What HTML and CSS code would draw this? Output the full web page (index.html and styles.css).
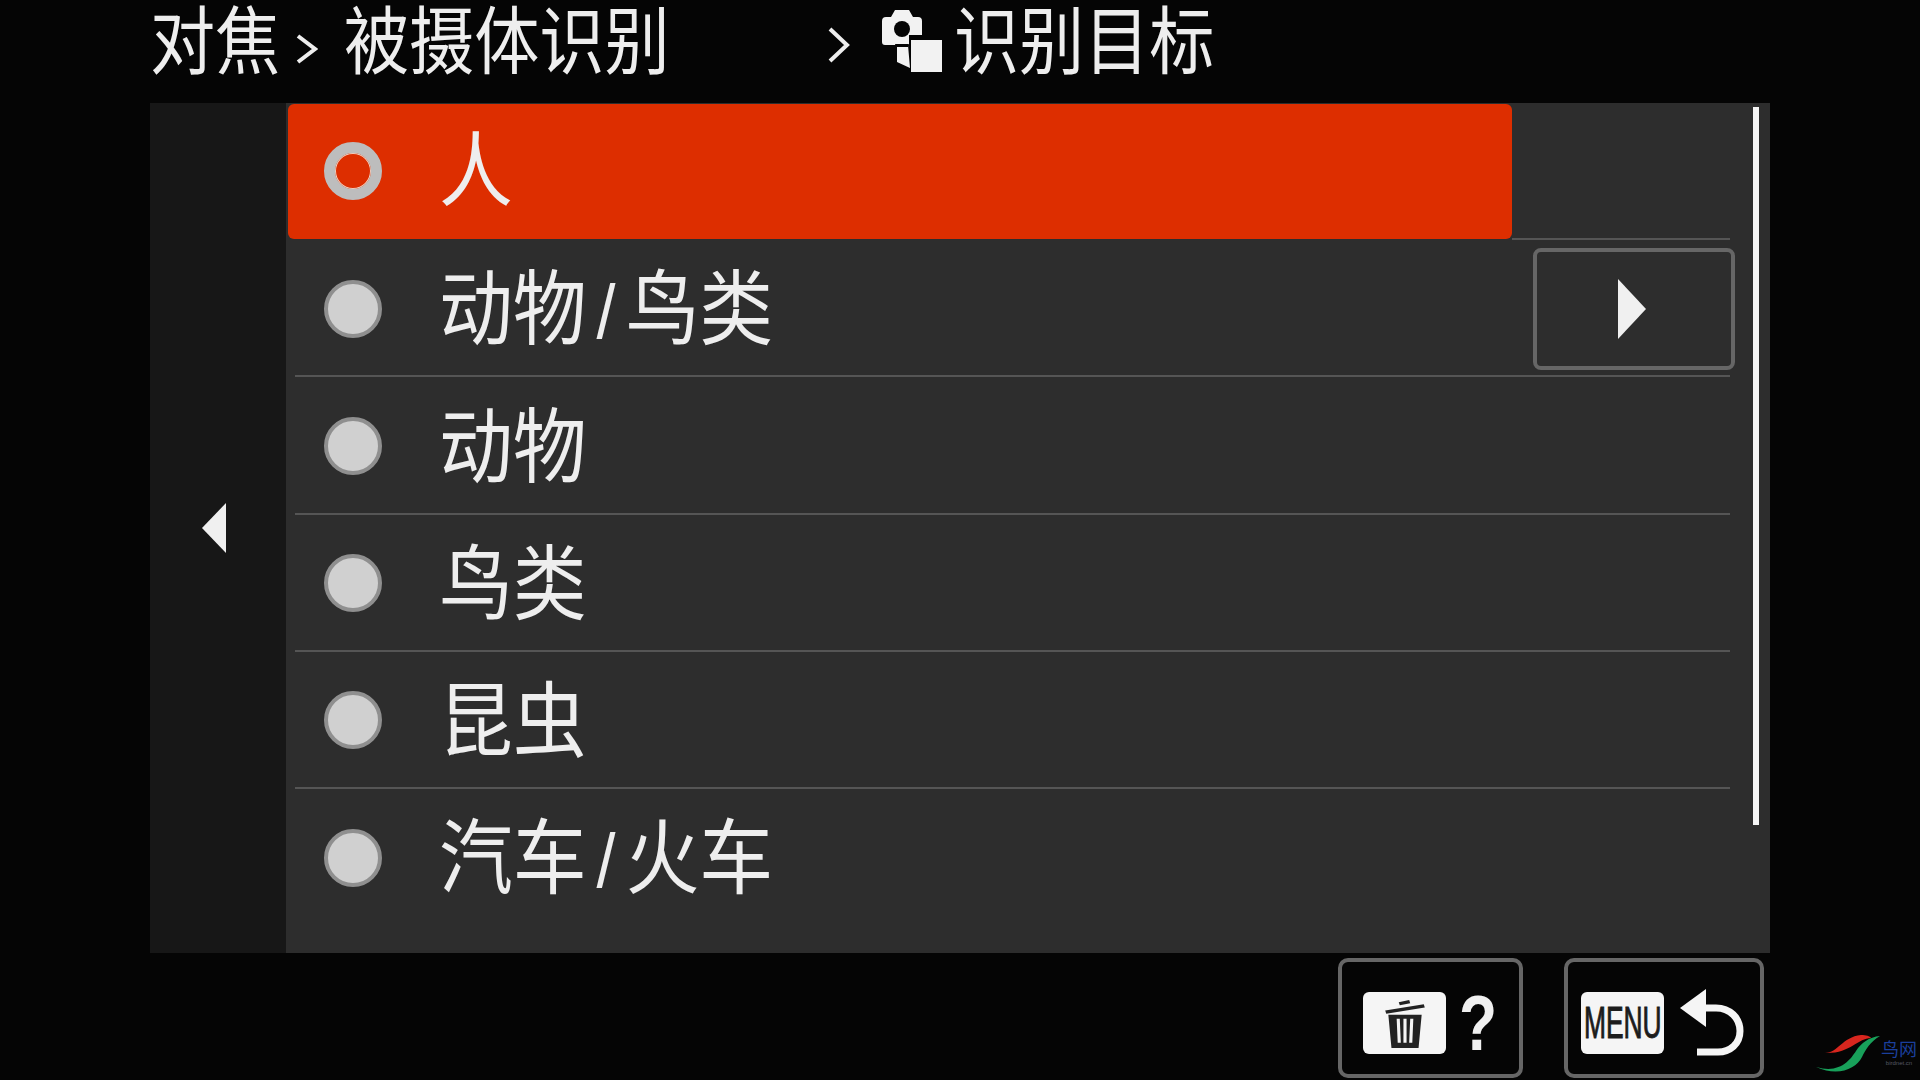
FILE: index.html
```html
<!DOCTYPE html>
<html lang="zh-CN">
<head>
    <meta charset="UTF-8">
    <title>识别目标</title>
    <link rel="stylesheet" href="styles.css">
</head>
<body>
    <header class="title-bar">
        <div class="crumb crumb-focus"><span>对焦</span></div>
        <svg class="chevron chevron-first" viewBox="0 0 22 30"><path d="M2 2 L19 15 L2 28" /></svg>
        <div class="crumb crumb-subject"><span>被摄体识别</span></div>
        <svg class="chevron chevron-second" viewBox="0 0 22 36"><path d="M2 2 L19 18 L2 34" /></svg>
        <svg class="target-icon" viewBox="0 0 60 62">
            <path fill="#f2f2f2" d="M0 11 Q0 7 4 7 H9 L13 0 H27 L31 7 H36 Q40 7 40 11 V25 H27 V35 H26 L28 58 L15 52 V35 H3 Q0 35 0 32 Z" />
            <circle cx="20" cy="19" r="8" fill="#050505" />
            <path fill="#050505" d="M13 34 H27 L26 37 H14 Z" />
            <rect x="29" y="30" width="31" height="32" fill="#f2f2f2" />
        </svg>
        <div class="crumb crumb-target"><span>识别目标</span></div>
    </header>

    <main class="panel">
        <aside class="side-strip">
            <svg class="side-arrow" viewBox="0 0 24 50"><path d="M24 0 V50 L0 25 Z" /></svg>
        </aside>
        <div class="list">
            <div class="row row-selected">
                <div class="row-label">
                    <span class="radio radio-on"></span>
                    <span class="row-text">人</span>
                </div>
            </div>
            <div class="row">
                <div class="row-label">
                    <span class="radio"></span>
                    <span class="row-text">动物<span class="slash">/</span>鸟类</span>
                </div>
                <div class="row-action">
                    <svg class="action-arrow" viewBox="0 0 28 60"><path d="M0 0 L28 30 L0 60 Z" /></svg>
                </div>
            </div>
            <div class="row">
                <div class="row-label">
                    <span class="radio"></span>
                    <span class="row-text">动物</span>
                </div>
            </div>
            <div class="row">
                <div class="row-label">
                    <span class="radio"></span>
                    <span class="row-text">鸟类</span>
                </div>
            </div>
            <div class="row">
                <div class="row-label">
                    <span class="radio"></span>
                    <span class="row-text">昆虫</span>
                </div>
            </div>
            <div class="row row-last">
                <div class="row-label">
                    <span class="radio"></span>
                    <span class="row-text">汽车<span class="slash">/</span>火车</span>
                </div>
            </div>
            <div class="scrollbar"></div>
        </div>
    </main>

    <footer class="key-bar">
        <div class="key key-help">
            <div class="key-tile">
                <svg class="trash-icon" viewBox="0 0 40 48">
                    <path d="M14 4 L24 2 L25 5 L15 7 Z" fill="#222" />
                    <path d="M1 12 L38 6 L39 9 L2 15 Z" fill="#222" />
                    <path d="M4 16 H36 L33 48 H7 Z" fill="#222" />
                    <path d="M12 20 H15 L16 43 H13 Z M18.5 20 H21.5 V43 H18.5 Z M25 20 H28 L27 43 H24 Z" fill="#f5f5f5" />
                </svg>
            </div>
            <span class="help-mark">?</span>
        </div>
        <div class="key key-menu">
            <div class="key-tile">
                <span class="menu-word">MENU</span>
            </div>
            <svg class="back-icon" viewBox="0 0 64 68">
                <path fill="#f5f5f5" d="M0 19 L26 0 V38 Z" />
                <path fill="none" stroke="#f5f5f5" stroke-width="7" d="M22 19 H36 C50 19 60 29 60 42 C60 55 50 63 38 63 H17" />
            </svg>
        </div>
    </footer>

    <div class="watermark">
        <svg class="watermark-logo" viewBox="0 0 64 38">
            <path fill="#d8261e" d="M9 19 C22 19 26 3 45 1 C50 1 54 2 55 4 C42 4 34 20 9 19 Z" />
            <path fill="#18a05a" d="M0 33 C24 40 34 26 40 17 C45 9 53 3 64 2 C54 8 50 15 46 23 C40 35 22 43 0 33 Z" />
        </svg>
        <div class="watermark-text">
            <span class="watermark-name">鸟网</span>
            <span class="watermark-url">birdnet.cn</span>
        </div>
    </div>
</body>
</html>
```

FILE: styles.css
```css
* {
    box-sizing: border-box;
}
html, body {
    margin: 0;
    height: 100%;
}
body {
    width: 1920px;
    height: 1080px;
    overflow: hidden;
    position: relative;
    background-color: #050505;
    color: #eeeeee;
    font-family: "Liberation Sans", "Noto Sans CJK SC", sans-serif;
}

/* title row */
.title-bar {
    display: flex;
    align-items: flex-start;
    height: 103px;
    padding-left: 150px;
}
.crumb {
    height: 86px;
    font-size: 74px;
    line-height: 86px;
    white-space: nowrap;
}
.crumb span {
    display: inline-block;
    transform: scaleX(0.88);
    transform-origin: left center;
}
.crumb-focus {
    width: 146px;
}
.crumb-subject {
    width: 484px;
    margin-left: 26px;
}
.crumb-target {
    margin-left: 12px;
}
.chevron {
    fill: none;
    stroke: #eeeeee;
    stroke-width: 4;
}
.chevron-first {
    width: 22px;
    height: 30px;
    margin-top: 34px;
}
.chevron-second {
    width: 22px;
    height: 36px;
    margin-top: 27px;
}
.target-icon {
    width: 60px;
    height: 62px;
    margin-top: 10px;
    margin-left: 32px;
}

/* main panel */
.panel {
    display: flex;
    width: 1620px;
    height: 850px;
    margin-left: 150px;
    background-color: #2d2d2d;
}
.side-strip {
    display: flex;
    align-items: center;
    justify-content: center;
    width: 136px;
    padding-right: 8px;
    background-color: #171717;
}
.side-arrow {
    width: 24px;
    height: 50px;
    fill: #f0f0f0;
}
.list {
    position: relative;
    flex: 1;
}
.row {
    position: relative;
    display: flex;
    align-items: center;
    height: 137.2px;
}
.row::after {
    content: "";
    position: absolute;
    left: 9px;
    right: 40px;
    bottom: 0;
    height: 2px;
    background-color: #555555;
}
.row-last::after {
    display: none;
}
.row-selected::after {
    left: 1226px;
}
.row-label {
    display: flex;
    align-items: center;
    width: 1224px;
    height: 135px;
    margin-left: 2px;
    padding-left: 36px;
}
.row-selected .row-label {
    background-color: #dd2e00;
    border-radius: 6px;
}
.radio {
    flex: none;
    width: 58px;
    height: 58px;
    border-radius: 50%;
    background-color: #d0d0d0;
    border: 4px solid #8f8f8f;
}
.radio-on {
    margin-bottom: 2px;
    background-color: #dd2e00;
    border: 11px solid #bdbdbd;
    box-shadow: inset 0 0 0 1px #f0d0c0;
}
.row-text {
    display: inline-block;
    margin-top: 4px;
    margin-left: 57px;
    font-size: 82px;
    line-height: 94px;
    white-space: nowrap;
    transform: scaleX(0.9);
    transform-origin: left center;
}
.row-selected .row-text {
    margin-top: 0;
}
.slash {
    margin: 0 11px;
    font-size: 76px;
}
.row-action {
    display: flex;
    align-items: center;
    justify-content: center;
    flex: none;
    width: 202px;
    height: 122px;
    margin-left: 21px;
    padding-right: 5px;
    border: 4px solid #666666;
    border-radius: 8px;
}
.action-arrow {
    width: 28px;
    height: 60px;
    fill: #f0f0f0;
}
.scrollbar {
    position: absolute;
    top: 4px;
    right: 11px;
    width: 6px;
    height: 718px;
    background-color: #f5f5f5;
}

/* bottom keys */
.key-bar {
    display: flex;
    justify-content: flex-end;
    gap: 41px;
    height: 122px;
    padding: 5px 156px 0 0;
}
.key {
    display: flex;
    align-items: center;
    height: 120px;
    padding-top: 9px;
    border: 4px solid #666666;
    border-radius: 10px;
}
.key-help {
    width: 185px;
    padding-left: 21px;
}
.key-menu {
    width: 200px;
    padding-left: 13px;
}
.key-tile {
    display: flex;
    align-items: center;
    justify-content: center;
    flex: none;
    width: 83px;
    height: 62px;
    background-color: #f5f5f5;
    border-radius: 6px;
}
.trash-icon {
    width: 42px;
    height: 50px;
}
.help-mark {
    margin-left: 13px;
    font-size: 78px;
    font-weight: 700;
    line-height: 78px;
    color: #f0f0f0;
    transform: scaleX(0.8);
    transform-origin: left center;
}
.menu-word {
    font-size: 44px;
    line-height: 44px;
    color: #1c1c1c;
    transform: scaleX(0.6);
    -webkit-text-stroke: 1px #1c1c1c;
}
.back-icon {
    width: 64px;
    height: 68px;
    margin-left: 16px;
}

/* watermark sits over the black corner */
.watermark {
    position: absolute;
    left: 1815px;
    top: 1034px;
    display: flex;
    align-items: flex-start;
}
.watermark-logo {
    width: 66px;
    height: 38px;
}
.watermark-text {
    display: flex;
    flex-direction: column;
    align-items: center;
    width: 36px;
    margin-top: 6px;
}
.watermark-name {
    font-size: 18px;
    line-height: 20px;
    color: #1a3f9c;
}
.watermark-url {
    font-size: 6px;
    line-height: 7px;
    color: #555a66;
}
```
